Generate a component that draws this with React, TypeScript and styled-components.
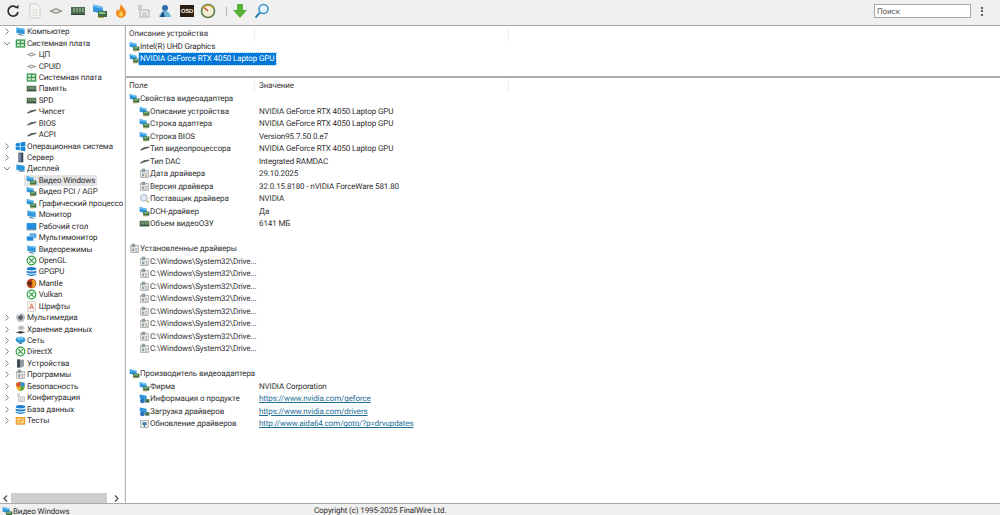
import React from "react";
import styled, { createGlobalStyle } from "styled-components";

const GlobalStyle = createGlobalStyle`
  html, body {
    margin: 0;
    padding: 0;
    height: 515px;
    overflow: hidden;
    background: #f0f0f0;
    font-family: Roboto, "Noto Sans", sans-serif;
    font-size: 8px;
    letter-spacing: -0.11px;
    text-rendering: geometricPrecision;
    color: #2a2a2a;
  }
`;

type IconKind =
  | "computer" | "board" | "chipRound" | "ram" | "chipFlat" | "windows" | "server"
  | "display" | "gpu" | "monitor" | "desktop" | "multi" | "xbox" | "stack" | "mantle"
  | "font" | "media" | "storage" | "network" | "device" | "programs" | "shield"
  | "config" | "tests" | "driver" | "search" | "web" | "update";

const Shape = ({ kind }: { kind: IconKind }) => {
  switch (kind) {
    case "computer":
    case "monitor":
      return (
        <>
          <path d="M2 2l12 2v8L2 10z" fill="#2f96dc" />
          <path d="M2 2l12 2v2L2 4z" fill="#6cc0ee" />
          <path d="M5 11l7 2v1l-7-1z" fill="#66788a" />
        </>
      );
    case "gpu":
      return (
        <>
          <path d="M1 1.500l10 2.500v7L1 8.500z" fill="#2f96dc" />
          <path d="M1 1.500l10 2.500v2L1 3.500z" fill="#6cc0ee" />
          <rect x="6" y="8" width="9" height="6" fill="#3f6f4a" />
          <rect x="7" y="9" width="6" height="2" fill="#8bbd7a" />
          <rect x="6" y="14" width="6" height="1" fill="#c9a53b" />
        </>
      );
    case "board":
      return (
        <>
          <rect x="1" y="2" width="14" height="12" fill="#3e9a58" />
          <rect x="3" y="4" width="4" height="3" fill="#e8f3e4" />
          <rect x="9" y="4" width="4" height="3" fill="#cfe7c4" />
          <rect x="3" y="9" width="10" height="3" fill="#d9ecd0" />
          <rect x="7" y="9" width="1.5" height="3" fill="#3e9a58" />
        </>
      );
    case "chipRound":
      return (
        <>
          <path d="M1 8l7-3 7 3-7 3z" fill="#8c9288" />
          <path d="M4 8l4-1.6L12 8l-4 1.6z" fill="#e8eadf" />
        </>
      );
    case "ram":
      return (
        <>
          <rect x="1" y="4" width="14" height="8" fill="#4b6b4f" />
          <path d="M3 5h2v4H3zM6 5h2v4H6zM9 5h2v4H9zM12 5h2v4h-2z" fill="#7f9a7d" />
          <rect x="1" y="11" width="14" height="1" fill="#2f3f31" />
        </>
      );
    case "chipFlat":
      return <path d="M1 10l6-4 8-1v2l-7 2-5 2z" fill="#5b5f60" />;
    case "windows":
      return (
        <path d="M1 3.5l6-1v5H1zM8 2.3l7-1.1V7.500H8zM1 8.500h6v5l-6-1zM8 8.500h7v6.300l-7-1.100z" fill="#1585d8" />
      );
    case "server":
      return (
        <>
          <rect x="5" y="1" width="7" height="14" fill="#3a4450" />
          <rect x="6" y="2" width="3" height="12" fill="#6f8fb5" />
        </>
      );
    case "display":
      return (
        <>
          <path d="M2 2l12 2v8L2 10z" fill="#2f96dc" />
          <rect x="6" y="11" width="6" height="2" fill="#7b8da0" />
        </>
      );
    case "desktop":
      return (
        <>
          <rect x="1" y="3" width="14" height="9" fill="#1e8fe1" />
          <rect x="1" y="12" width="14" height="1.500" fill="#5b6d7d" />
        </>
      );
    case "multi":
      return (
        <>
          <rect x="5" y="2" width="10" height="7" fill="#58a9e4" />
          <rect x="1" y="6" width="10" height="7" fill="#2288d8" stroke="#e6f2fb" strokeWidth=".7" />
        </>
      );
    case "xbox":
      return (
        <>
          <circle cx="8" cy="8" r="6.300" fill="#fff" stroke="#2c9e3f" strokeWidth="1.700" />
          <path d="M4.500 4.500l7 7M11.500 4.500l-7 7" stroke="#2c9e3f" strokeWidth="1.600" />
        </>
      );
    case "stack":
      return (
        <>
          <ellipse cx="8" cy="4" rx="7" ry="2.500" fill="#1e7fd0" />
          <path d="M1 6.500c2 2 12 2 14 0v3c-2 2-12 2-14 0z" fill="#1e7fd0" />
          <path d="M1 11c2 2 12 2 14 0v1.500c-2 2.500-12 2.500-14 0z" fill="#1e7fd0" />
        </>
      );
    case "mantle":
      return (
        <>
          <circle cx="8" cy="8" r="7" fill="#b23a1c" />
          <path d="M8 2a6 6 0 0 1 0 12c2-3 2-9 0-12z" fill="#f0a51e" />
          <circle cx="5.500" cy="8" r="2.500" fill="#43291c" />
        </>
      );
    case "font":
      return (
        <>
          <rect x="2.500" y="1" width="11" height="14" fill="#fbf6f0" stroke="#c7c2bb" />
          <path d="M5 12l3-8 3 8M6.200 9.500h3.600" fill="none" stroke="#c0472e" strokeWidth="1" />
        </>
      );
    case "media":
      return (
        <>
          <circle cx="8" cy="8" r="6.500" fill="#bfc3c7" />
          <circle cx="8" cy="8" r="3.500" fill="#5b6066" />
          <path d="M8 1.500a6.500 6.500 0 0 0-5 2.500l3 2z" fill="#eef0f2" />
        </>
      );
    case "storage":
      return (
        <>
          <ellipse cx="9" cy="5.500" rx="5" ry="3.500" fill="#c9ced2" />
          <circle cx="9" cy="5.500" r="1.200" fill="#6f7880" />
          <path d="M1 12l7-2 7 2-7 2z" fill="#3a3f44" />
        </>
      );
    case "network":
      return (
        <>
          <ellipse cx="8" cy="7" rx="7" ry="4.500" fill="#2f9bd8" />
          <path d="M3 4c3-2 8-2 10 0l-3 3H5z" fill="#74c4ec" />
          <rect x="6" y="11" width="4" height="2" fill="#5d6f7e" />
        </>
      );
    case "device":
      return (
        <>
          <rect x="3" y="2" width="5" height="12" fill="#3c4650" />
          <path d="M8 3l5-1v10l-5 2z" fill="#8b98a4" />
        </>
      );
    case "programs":
    case "driver":
      return (
        <>
          <rect x="2.500" y="3.500" width="11" height="10.500" fill="#eceae6" stroke="#9a9c9d" />
          <rect x="4" y="1" width="5" height="5" fill="#8d9da6" />
          <rect x="4.500" y="8" width="3" height="4" fill="#8f9da5" />
          <path d="M9 8h3M9 10h3M9 12h3" stroke="#9a9c9d" />
        </>
      );
    case "shield":
      return (
        <>
          <path d="M8 1l6 2v6c0 3-3 5-6 6-3-1-6-3-6-6V3z" fill="#e9b22d" />
          <path d="M8 1v7H2V3z" fill="#d24d2c" />
          <path d="M8 1l6 2v5H8z" fill="#2f8fd6" />
          <path d="M8 8h6c0 3-3 6-6 7z" fill="#4aa548" />
        </>
      );
    case "config":
      return (
        <>
          <rect x="5" y="7" width="9" height="7" fill="#f2f1ee" stroke="#a8acb0" />
          <rect x="3" y="2" width="4" height="5" fill="#c7ced4" />
          <path d="M7 10h5M7 12h5" stroke="#b0b4b8" />
        </>
      );
    case "tests":
      return (
        <>
          <rect x="1" y="3" width="14" height="11" rx="1" fill="#f0a23a" />
          <rect x="3" y="5" width="10" height="7" fill="#fbd27f" />
          <path d="M5 8l2 2 4-4" fill="none" stroke="#d66a1b" strokeWidth="1.300" />
        </>
      );
    case "search":
      return (
        <>
          <circle cx="7" cy="7" r="5" fill="#dce9f5" stroke="#a5adb5" strokeWidth="1.300" />
          <path d="M10.500 10.500l4 3.500" stroke="#b9a27c" strokeWidth="1.800" />
        </>
      );
    case "web":
      return (
        <>
          <path d="M1 2l10 2v6L1 8z" fill="#2f96dc" />
          <circle cx="5" cy="11.500" r="3.500" fill="#2c6fbd" />
          <rect x="9" y="9" width="6" height="5" fill="#3f6f4a" />
        </>
      );
    case "update":
      return (
        <>
          <rect x="2.500" y="3.500" width="11" height="10.500" fill="#eceae6" stroke="#9a9c9d" />
          <path d="M5 6h6v4H9v3H7v-3H5z" fill="#3f7ea8" />
        </>
      );
    default:
      return null;
  }
};

const IconBox = styled.svg`
  flex: none;
  width: 11px;
  height: 11px;
`;

const Icon = ({ kind }: { kind: IconKind }) => (
  <IconBox viewBox="0 0 16 16">
    <Shape kind={kind} />
  </IconBox>
);

const Page = styled.div`
  display: flex;
  flex-direction: column;
  width: 1000px;
  height: 515px;
  overflow: hidden;
`;

const Toolbar = styled.div`
  display: flex;
  align-items: center;
  flex: none;
  height: 22px;
  padding: 0 0 3px 5px;
  background: #f0f0f0;
  border-bottom: 1px solid #a9a9a9;
`;

const ToolIcon = styled.svg<{ $gap?: number }>`
  flex: none;
  width: 16px;
  height: 16px;
  margin-right: ${(p) => p.$gap ?? 5.700}px;
`;

const ToolSeparator = styled.div`
  flex: none;
  width: 1px;
  height: 9px;
  margin-right: 4.500px;
  background: #b4b4b4;
`;

const SearchBox = styled.div`
  flex: none;
  display: flex;
  align-items: center;
  width: 93px;
  height: 12px;
  margin-left: auto;
  padding-left: 2px;
  background: #fff;
  border: 1px solid #a8a8a8;
  color: #5f5f5f;
`;

const MoreDots = styled.div`
  flex: none;
  display: flex;
  flex-direction: column;
  gap: 1.500px;
  margin: 0 17px 0 10px;
`;

const Dot = styled.span`
  width: 2px;
  height: 2px;
  border-radius: 50%;
  background: #2b2b2b;
`;

const Body = styled.div`
  flex: 1;
  display: flex;
  min-height: 0;
`;

const Sidebar = styled.div`
  flex: none;
  display: flex;
  flex-direction: column;
  justify-content: space-between;
  width: 124px;
  background: #fff;
  overflow: hidden;
`;

const TreeList = styled.div`
  display: flex;
  flex-direction: column;
`;

const TreeRow = styled.div<{ $depth: number }>`
  display: flex;
  align-items: center;
  height: 11.440px;
  padding-left: ${(p) => (p.$depth === 0 ? 4 : 24)}px;
  white-space: nowrap;
  color: #2f2f2f;
`;

const TreeItemBox = styled.div<{ $selected?: boolean; $depth: number }>`
  display: flex;
  align-items: center;
  gap: ${(p) => (p.$depth === 0 ? 1 : 1.700)}px;
  height: 11.440px;
  padding: 0 2px 0 ${(p) => (p.$depth === 0 ? 0 : 2)}px;
  background: ${(p) => (p.$selected ? "#e4e4e4" : "transparent")};
`;

const Chevron = styled.svg`
  flex: none;
  width: 6px;
  height: 7px;
  margin-right: 5px;
  fill: none;
  stroke: #7d7d7d;
  stroke-width: 1;
`;

const HScroll = styled.div`
  flex: none;
  display: flex;
  align-items: center;
  height: 10px;
  padding-left: 3px;
`;

const ScrollArrow = styled.svg`
  flex: none;
  width: 5px;
  height: 7px;
  fill: none;
  stroke: #4a4a4a;
  stroke-width: 1.200;
`;

const ScrollThumb = styled.div`
  flex: none;
  width: 96px;
  height: 10px;
  margin: 0 7px 0 3px;
  background: #cdcdcd;
`;

const Splitter = styled.div`
  flex: none;
  width: 1px;
  background: #f0f0f0;
  border-right: 1px solid #b5b5b5;
`;

const Main = styled.div`
  flex: 1;
  display: flex;
  flex-direction: column;
  min-width: 0;
  background: #fff;
`;

const DevicePanel = styled.div`
  flex: none;
  height: 49px;
  padding: 0.500px 0 0 3px;
  border-bottom: 2px solid #ababab;
`;

const HeaderRow = styled.div`
  display: grid;
  grid-template-columns: 126px 254px 1fr;
  height: 14px;
`;

const HeaderCell = styled.div<{ $inset?: boolean }>`
  display: flex;
  align-items: center;
  padding-left: ${(p) => (p.$inset ? 4 : 0)}px;
  border-right: 1px solid #eeeeee;
  color: #3a3a3a;
`;

const DeviceRow = styled.div`
  display: flex;
  align-items: center;
  height: 12.300px;
`;

const DeviceName = styled.span<{ $selected?: boolean }>`
  margin-left: -1px;
  padding: 0 2px 0 1px;
  line-height: 12px;
  background: ${(p) => (p.$selected ? "#0078d7" : "transparent")};
  color: ${(p) => (p.$selected ? "#fff" : "#2f2f2f")};
  outline: ${(p) => (p.$selected ? "1px dotted #9cc8ea" : "none")};
`;

const Details = styled.div`
  flex: 1;
  min-height: 0;
  padding: 1px 0 0 3px;
`;

const DataRow = styled.div`
  display: grid;
  grid-template-columns: 130px 1fr;
  align-items: center;
  height: 12.500px;
  white-space: nowrap;
`;

const FieldCell = styled.div<{ $nested: boolean }>`
  display: flex;
  align-items: center;
  padding-left: ${(p) => (p.$nested ? 10 : 0)}px;
  color: #333;
`;

const ValueCell = styled.div`
  color: #2f2f2f;
`;

const LinkCell = styled.span`
  color: #1f6f99;
  text-decoration: underline;
`;

const StatusBar = styled.div`
  flex: none;
  display: grid;
  grid-template-columns: 312px 1fr;
  align-items: start;
  height: 9px;
  padding: 2px 0 0 2px;
  background: #f0f0f0;
  border-top: 1px solid #a9a9a9;
  color: #2f2f2f;
`;

const StatusCell = styled.div`
  display: flex;
  align-items: center;
  white-space: nowrap;
`;

type TreeItem = { label: string; icon: IconKind; depth: 0 | 1; open?: boolean; selected?: boolean };

const tree: TreeItem[] = [
  { label: "Компьютер", icon: "computer", depth: 0 },
  { label: "Системная плата", icon: "board", depth: 0, open: true },
  { label: "ЦП", icon: "chipRound", depth: 1 },
  { label: "CPUID", icon: "chipRound", depth: 1 },
  { label: "Системная плата", icon: "board", depth: 1 },
  { label: "Память", icon: "ram", depth: 1 },
  { label: "SPD", icon: "ram", depth: 1 },
  { label: "Чипсет", icon: "chipFlat", depth: 1 },
  { label: "BIOS", icon: "chipFlat", depth: 1 },
  { label: "ACPI", icon: "chipFlat", depth: 1 },
  { label: "Операционная система", icon: "windows", depth: 0 },
  { label: "Сервер", icon: "server", depth: 0 },
  { label: "Дисплей", icon: "display", depth: 0, open: true },
  { label: "Видео Windows", icon: "gpu", depth: 1, selected: true },
  { label: "Видео PCI / AGP", icon: "gpu", depth: 1 },
  { label: "Графический процессо", icon: "gpu", depth: 1 },
  { label: "Монитор", icon: "monitor", depth: 1 },
  { label: "Рабочий стол", icon: "desktop", depth: 1 },
  { label: "Мультимонитор", icon: "multi", depth: 1 },
  { label: "Видеорежимы", icon: "monitor", depth: 1 },
  { label: "OpenGL", icon: "xbox", depth: 1 },
  { label: "GPGPU", icon: "stack", depth: 1 },
  { label: "Mantle", icon: "mantle", depth: 1 },
  { label: "Vulkan", icon: "xbox", depth: 1 },
  { label: "Шрифты", icon: "font", depth: 1 },
  { label: "Мультимедиа", icon: "media", depth: 0 },
  { label: "Хранение данных", icon: "storage", depth: 0 },
  { label: "Сеть", icon: "network", depth: 0 },
  { label: "DirectX", icon: "xbox", depth: 0 },
  { label: "Устройства", icon: "device", depth: 0 },
  { label: "Программы", icon: "programs", depth: 0 },
  { label: "Безопасность", icon: "shield", depth: 0 },
  { label: "Конфигурация", icon: "config", depth: 0 },
  { label: "База данных", icon: "stack", depth: 0 },
  { label: "Тесты", icon: "tests", depth: 0 },
];

type Row = { field?: string; value?: string; icon?: IconKind; nested?: boolean; link?: boolean };

const driverPath = "C:\\Windows\\System32\\Drive...";

const rows: Row[] = [
  { field: "Свойства видеоадаптера", icon: "gpu" },
  { field: "Описание устройства", icon: "gpu", nested: true, value: "NVIDIA GeForce RTX 4050 Laptop GPU" },
  { field: "Строка адаптера", icon: "gpu", nested: true, value: "NVIDIA GeForce RTX 4050 Laptop GPU" },
  { field: "Строка BIOS", icon: "gpu", nested: true, value: "Version95.7.50.0.e7" },
  { field: "Тип видеопроцессора", icon: "chipFlat", nested: true, value: "NVIDIA GeForce RTX 4050 Laptop GPU" },
  { field: "Тип DAC", icon: "chipFlat", nested: true, value: "Integrated RAMDAC" },
  { field: "Дата драйвера", icon: "driver", nested: true, value: "29.10.2025" },
  { field: "Версия драйвера", icon: "driver", nested: true, value: "32.0.15.8180 - nVIDIA ForceWare 581.80" },
  { field: "Поставщик драйвера", icon: "search", nested: true, value: "NVIDIA" },
  { field: "DCH-драйвер", icon: "gpu", nested: true, value: "Да" },
  { field: "Объем видеоОЗУ", icon: "ram", nested: true, value: "6141 МБ" },
  {},
  { field: "Установленные драйверы", icon: "driver" },
  ...Array.from({ length: 8 }, (): Row => ({ field: driverPath, icon: "driver", nested: true })),
  {},
  { field: "Производитель видеоадаптера", icon: "gpu" },
  { field: "Фирма", icon: "gpu", nested: true, value: "NVIDIA Corporation" },
  { field: "Информация о продукте", icon: "web", nested: true, value: "https://www.nvidia.com/geforce", link: true },
  { field: "Загрузка драйверов", icon: "web", nested: true, value: "https://www.nvidia.com/drivers", link: true },
  { field: "Обновление драйверов", icon: "update", nested: true, value: "http://www.aida64.com/goto/?p=drvupdates", link: true },
];

const ToolbarIcons = () => (
  <>
    <ToolIcon viewBox="0 0 16 16">
      <path d="M11.500 4.500a5 5 0 1 0 1.500 4.500" fill="none" stroke="#2b2b2b" strokeWidth="1.700" />
      <path d="M10 5l3.500.5V1.800z" fill="#2b2b2b" />
    </ToolIcon>
    <ToolIcon viewBox="0 0 16 16">
      <path d="M3 1h7l3 3v11H3z" fill="#f4f4f0" stroke="#cfcfcb" />
      <path d="M5.500 7h5M5.500 9.500h5M5.500 12h5" stroke="#d5d5d0" />
    </ToolIcon>
    <ToolIcon viewBox="0 0 16 16"><Shape kind="chipRound" /></ToolIcon>
    <ToolIcon viewBox="0 0 16 16"><Shape kind="ram" /></ToolIcon>
    <ToolIcon viewBox="0 0 16 16"><Shape kind="gpu" /></ToolIcon>
    <ToolIcon viewBox="0 0 16 16">
      <path d="M8 1c1 3 5 5 5 9a5 5 0 0 1-10 0c0-2 1-3 2-4 0 1 .5 2 1 2 1-2 1-5 2-7z" fill="#f08a1c" />
      <path d="M8 8c1 1 2 2 2 3.500a2 2 0 0 1-4 0C6 10 7 9.500 8 8z" fill="#fbd24e" />
    </ToolIcon>
    <ToolIcon viewBox="0 0 16 16"><Shape kind="config" /></ToolIcon>
    <ToolIcon viewBox="0 0 16 16">
      <circle cx="8" cy="5" r="3" fill="#2b6ea8" />
      <path d="M2 14c1-5 4-6 6-6s5 1 6 6z" fill="#6fb5d8" />
      <path d="M6 8L3 14h5z" fill="#1d4f7c" />
    </ToolIcon>
    <ToolIcon viewBox="0 0 16 16">
      <rect x="1" y="2" width="14" height="12" fill="#2b1d12" />
      <text x="8" y="10" textAnchor="middle" fontSize="6" fontWeight="700" fill="#efe9dc" fontFamily="Liberation Sans, sans-serif">OSD</text>
    </ToolIcon>
    <ToolIcon viewBox="0 0 16 16" $gap={10}>
      <circle cx="8" cy="8" r="6.500" fill="#f5efd8" stroke="#5f7f52" strokeWidth="1.600" />
      <path d="M8 8L4 4.500" stroke="#c0472e" strokeWidth="1.400" />
      <path d="M3 5a6 6 0 0 1 10 0" fill="none" stroke="#d8a12e" strokeWidth="1.200" />
    </ToolIcon>
    <ToolSeparator />
    <ToolIcon viewBox="0 0 16 16" $gap={6}>
      <path d="M5 1h6v6h4l-7 8-7-8h4z" fill="#58b038" />
    </ToolIcon>
    <ToolIcon viewBox="0 0 16 16">
      <circle cx="9.500" cy="6" r="4.500" fill="#e5f3fb" stroke="#3f93c8" strokeWidth="1.600" />
      <path d="M6 9.500L1.500 14.500" stroke="#2f7fb5" strokeWidth="2" />
    </ToolIcon>
  </>
);

const App = () => (
  <Page>
    <GlobalStyle />
    <Toolbar>
      <ToolbarIcons />
      <SearchBox>Поиск</SearchBox>
      <MoreDots>
        <Dot />
        <Dot />
        <Dot />
      </MoreDots>
    </Toolbar>
    <Body>
      <Sidebar>
        <TreeList>
          {tree.map((item, i) => (
            <TreeRow key={i} $depth={item.depth}>
              {item.depth === 0 && (
                <Chevron viewBox="0 0 6 7">
                  <path d={item.open ? "M0 2l3 3 3-3" : "M1.500 0.500l3 3-3 3"} />
                </Chevron>
              )}
              <TreeItemBox $selected={item.selected} $depth={item.depth}>
                <Icon kind={item.icon} />
                {item.label}
              </TreeItemBox>
            </TreeRow>
          ))}
        </TreeList>
        <HScroll>
          <ScrollArrow viewBox="0 0 5 7">
            <path d="M4 .5l-3 3 3 3" />
          </ScrollArrow>
          <ScrollThumb />
          <ScrollArrow viewBox="0 0 5 7">
            <path d="M1 .5l3 3-3 3" />
          </ScrollArrow>
        </HScroll>
      </Sidebar>
      <Splitter />
      <Main>
        <DevicePanel>
          <HeaderRow>
            <HeaderCell>Описание устройства</HeaderCell>
            <HeaderCell />
          </HeaderRow>
          <DeviceRow>
            <Icon kind="gpu" />
            <DeviceName>Intel(R) UHD Graphics</DeviceName>
          </DeviceRow>
          <DeviceRow>
            <Icon kind="gpu" />
            <DeviceName $selected>NVIDIA GeForce RTX 4050 Laptop GPU</DeviceName>
          </DeviceRow>
        </DevicePanel>
        <Details>
          <HeaderRow>
            <HeaderCell>Поле</HeaderCell>
            <HeaderCell $inset>Значение</HeaderCell>
          </HeaderRow>
          {rows.map((row, i) => (
            <DataRow key={i}>
              <FieldCell $nested={!!row.nested}>
                {row.icon && <Icon kind={row.icon} />}
                {row.field}
              </FieldCell>
              {row.link ? (
                <ValueCell>
                  <LinkCell>{row.value}</LinkCell>
                </ValueCell>
              ) : (
                <ValueCell>{row.value}</ValueCell>
              )}
            </DataRow>
          ))}
        </Details>
      </Main>
    </Body>
    <StatusBar>
      <StatusCell>
        <Icon kind="gpu" />
        Видео Windows
      </StatusCell>
      <StatusCell>Copyright (c) 1995-2025 FinalWire Ltd.</StatusCell>
    </StatusBar>
  </Page>
);

export default App;
